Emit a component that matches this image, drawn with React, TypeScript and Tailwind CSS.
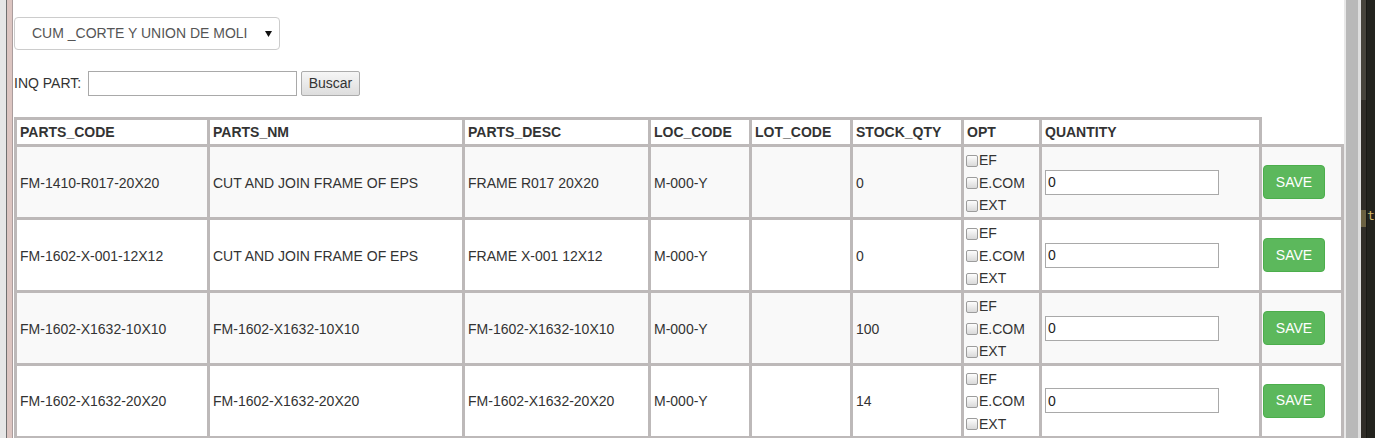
const rows = [
  { code: "FM-1410-R017-20X20", nm: "CUT AND JOIN FRAME OF EPS", desc: "FRAME R017 20X20", loc: "M-000-Y", qty: "0" },
  { code: "FM-1602-X-001-12X12", nm: "CUT AND JOIN FRAME OF EPS", desc: "FRAME X-001 12X12", loc: "M-000-Y", qty: "0" },
  { code: "FM-1602-X1632-10X10", nm: "FM-1602-X1632-10X10", desc: "FM-1602-X1632-10X10", loc: "M-000-Y", qty: "100" },
  { code: "FM-1602-X1632-20X20", nm: "FM-1602-X1632-20X20", desc: "FM-1602-X1632-20X20", loc: "M-000-Y", qty: "14" },
];

const headers = ["PARTS_CODE", "PARTS_NM", "PARTS_DESC", "LOC_CODE", "LOT_CODE", "STOCK_QTY", "OPT", "QUANTITY"];

function Check({ label }: { label: string }) {
  return (
    <div className="flex h-[22.5px] items-center">
      <span className="mr-[1px] inline-block h-[12px] w-[12px] rounded-[2px] border border-[#9c9c9c] bg-linear-to-b from-[#fdfdfd] to-[#d9d9d9]" />
      <span>{label}</span>
    </div>
  );
}

export default function App() {
  return (
    <div className="flex h-[438px] w-[1376px] overflow-hidden bg-white font-['Liberation_Sans',Arial,sans-serif] text-[14px] text-[#333]">
      {/* left frame */}
      <div className="flex shrink-0">
        <div className="w-[6px] bg-[#e6e6e6]" />
        <div className="w-[1px] bg-[#707070]" />
        <div className="w-[5px] bg-[#dcc5c1]" />
        <div className="w-[1px] bg-[#aa9d9d]" />
      </div>

      {/* page */}
      <div className="w-[1331px] shrink-0 pl-[1px] pt-[17px]">
        <div className="flex h-[33px] w-[266px] items-center rounded-[4px] border border-[#cccccc] bg-white pl-[17px] pr-[7px] text-[#555]">
          <span className="whitespace-nowrap">CUM _CORTE Y UNION DE MOLI</span>
          <svg className="ml-auto" width="7" height="6" viewBox="0 0 7 6">
            <polygon points="0,0 7,0 3.5,6" fill="#111" />
          </svg>
        </div>

        <div className="mt-[21px] flex h-[25px] items-center">
          <span className="w-[74px] whitespace-nowrap">INQ PART:</span>
          <input className="h-[25px] w-[209px] border border-[#a9a9a9] bg-white px-[2px] outline-none" />
          <button className="ml-[4px] h-[25px] w-[59px] rounded-[2px] border border-[#acacac] bg-linear-to-b from-[#f6f6f6] to-[#dddddd] text-[#333]">
            Buscar
          </button>
        </div>

        <table className="mt-[21px] w-[1330px] table-fixed border-separate border-spacing-0">
          <colgroup>
            <col className="w-[193px]" />
            <col className="w-[255px]" />
            <col className="w-[186px]" />
            <col className="w-[101px]" />
            <col className="w-[101px]" />
            <col className="w-[111px]" />
            <col className="w-[78px]" />
            <col className="w-[220px]" />
            <col className="w-[85px]" />
          </colgroup>
          <thead>
            <tr>
              {headers.map((h) => (
                <th
                  key={h}
                  className="h-[27px] border-l-[3px] border-t-[3px] border-[#bdb9b9] pl-[3px] text-left align-middle font-bold"
                >
                  {h}
                </th>
              ))}
              <th className="border-l-[3px] border-[#bdb9b9]" />
            </tr>
          </thead>
          <tbody>
            {rows.map((r, i) => {
              const bg = i % 2 === 0 ? "bg-[#f9f9f9]" : "bg-white";
              const last = i === rows.length - 1 ? "border-b-[3px]" : "";
              const cell = `h-[73px] border-l-[3px] border-t-[3px] border-[#bdb9b9] align-middle ${last}`;
              return (
                <tr key={r.code} className={bg}>
                  <td className={`${cell} pl-[3px] pt-[2px]`}>{r.code}</td>
                  <td className={`${cell} pl-[3px] pt-[2px]`}>{r.nm}</td>
                  <td className={`${cell} pl-[3px] pt-[2px]`}>{r.desc}</td>
                  <td className={`${cell} pl-[3px] pt-[2px]`}>{r.loc}</td>
                  <td className={`${cell} pl-[3px]`}></td>
                  <td className={`${cell} pl-[3px] pt-[2px]`}>{r.qty}</td>
                  <td className={`${cell} pl-[2px] pt-[2px]`}>
                    <Check label="EF" />
                    <Check label="E.COM" />
                    <Check label="EXT" />
                  </td>
                  <td className={`${cell} pl-[3px]`}>
                    <input
                      defaultValue="0"
                      className="block h-[25px] w-[174px] border border-[#a9a9a9] bg-white px-[2px] text-[#222] outline-none"
                    />
                  </td>
                  <td className={`${cell} border-r-[3px] pl-[1px]`}>
                    <button className="h-[34px] w-[62px] rounded-[4px] border border-[#4cae4c] bg-[#5cb85c] text-white">
                      SAVE
                    </button>
                  </td>
                </tr>
              );
            })}
          </tbody>
        </table>
      </div>

      {/* scrollbar + editor behind */}
      <div className="flex shrink-0">
        <div className="w-[2px] bg-[#e8e8e8]" />
        <div className="w-[12px] bg-[#b9b9b9]" />
        <div className="w-[3px] bg-[#dedede]" />
        <div className="flex w-[5px] flex-col bg-[#302d28]">
          <div className="h-[100px] bg-[#47443c]" />
          <div className="mt-[110px] h-[17px] bg-[#6b6142]" />
        </div>
        <div className="w-[1px] bg-[#191915]" />
        <div className="w-[8px] bg-[#23231e] pt-[208px] font-['DejaVu_Sans_Mono',monospace] text-[13px] leading-[16px] text-[#d2b866]">
          t
        </div>
      </div>
    </div>
  );
}
